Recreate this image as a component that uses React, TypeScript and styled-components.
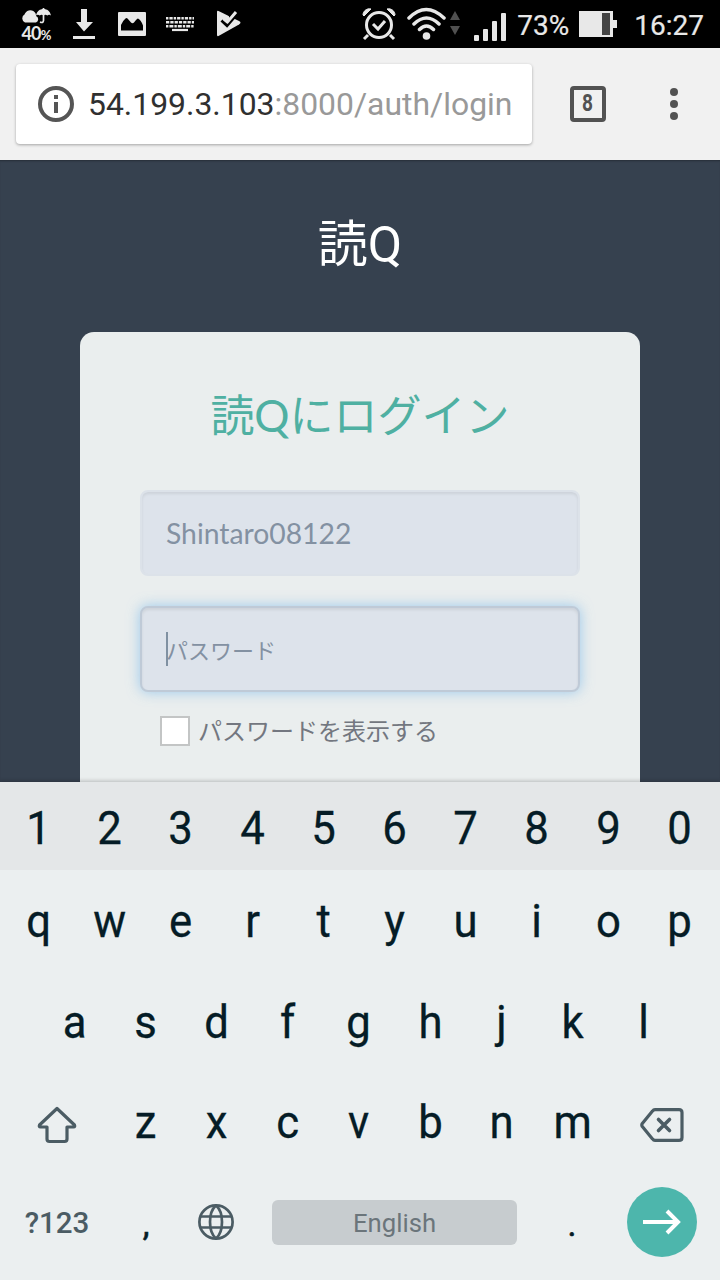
import React from "react";
import styled, { createGlobalStyle } from "styled-components";

const GlobalStyle = createGlobalStyle`
  * { box-sizing: border-box; }
  body { margin: 0; background: #ebeff0; overflow: hidden; }
`;

const Screen = styled.div`
  width: 720px;
  height: 1280px;
  display: flex;
  flex-direction: column;
  overflow: hidden;
  font-family: Roboto, "Noto Sans CJK JP", sans-serif;
`;

const StatusBar = styled.header`
  height: 48px;
  flex: none;
  display: flex;
  justify-content: space-between;
  background: #000;
  color: #e8e8e8;
`;

const StatusGroup = styled.div`
  display: flex;
  align-items: center;
`;

const StatusText = styled.span<{ $gap: number }>`
  font-size: 28px;
  line-height: 48px;
  padding-top: 4px;
  margin-left: ${(p) => p.$gap}px;
  white-space: nowrap;
  -webkit-text-stroke: 0.2px currentColor;
`;

const Weather = styled.div`
  display: flex;
  flex-direction: column;
  align-items: center;
  width: 32px;
  height: 32px;
  margin-left: 20px;
`;

const WeatherText = styled.span`
  font: 700 18px/19px Lato, sans-serif;
  letter-spacing: -0.8px;
  white-space: nowrap;
  small { font-size: 13px; font-weight: 700; }
`;

const Icon = styled.svg<{ $ml?: number }>`
  display: block;
  flex: none;
  margin-left: ${(p) => p.$ml ?? 0}px;
`;

const Toolbar = styled.div`
  height: 112px;
  flex: none;
  display: flex;
  align-items: center;
  padding-left: 16px;
  background: #f1f1f1;
`;

const AddressBar = styled.div`
  width: 516px;
  height: 80px;
  display: flex;
  align-items: center;
  padding-left: 22px;
  border-radius: 4px;
  background: #fff;
  box-shadow: 0 1px 3px rgba(0, 0, 0, 0.32);
`;

const Url = styled.div`
  margin-left: 14px;
  font-size: 31.9px;
  line-height: 40px;
  color: #999;
  white-space: nowrap;
  b { font-weight: 400; color: #303030; }
`;

const TabCount = styled.div`
  width: 36px;
  height: 36px;
  margin-left: 38px;
  border: 4px solid #525252;
  border-radius: 4px;
  display: flex;
  align-items: center;
  justify-content: center;
  color: #525252;
  font-size: 23px;
  font-weight: 700;
  line-height: 28px;
  span { transform: scaleX(0.83); }
`;

const Page = styled.main`
  height: 622px;
  flex: none;
  overflow: hidden;
  background: #36414f;
  box-shadow: inset 0 2px 2px -1px rgba(0, 0, 0, 0.3);
  display: flex;
  flex-direction: column;
  align-items: center;
`;

const Brand = styled.h1`
  margin: 49px 0 0;
  height: 123px;
  flex: none;
  font-size: 50px;
  font-weight: 400;
  line-height: 72px;
  color: #fff;
`;

const Card = styled.section`
  width: 560px;
  height: 560px;
  flex: none;
  padding: 47px 60px 0;
  border-radius: 14px 14px 0 0;
  background: #eaeeee;
`;

const CardTitle = styled.h2`
  margin: 0 0 39px;
  height: 72px;
  text-align: center;
  font: 400 44px/72px Lato, "Noto Sans CJK JP", sans-serif;
  color: #4fb0a2;
`;

const Field = styled.div<{ $focused?: boolean }>`
  height: 86px;
  margin-bottom: 30px;
  padding-left: 24px;
  display: flex;
  align-items: center;
  border: 2px solid ${(p) => (p.$focused ? "#bfcad7" : "#dce2e9")};
  border-radius: 8px;
  background: #dde3eb;
  color: #8391a2;
  font-family: Lato, "Noto Sans CJK JP", sans-serif;
  font-size: ${(p) => (p.$focused ? 22 : 28.3)}px;
  line-height: 40px;
  box-shadow: inset 0 2px 3px rgba(0, 0, 0, 0.075)
    ${(p) => (p.$focused ? ", 0 0 13px rgba(102, 175, 233, 0.6)" : "")};
`;

const Placeholder = styled.span`
  padding-top: 4px;
`;

const Caret = styled.i`
  width: 2px;
  height: 34px;
  margin-right: -2px;
  background: #8091a2;
`;

const CheckRow = styled.label`
  display: flex;
  align-items: center;
  height: 36px;
  margin: -9px 0 0 20px;
  color: #737780;
  font: 400 24px/36px Lato, "Noto Sans CJK JP", sans-serif;
`;

const Checkbox = styled.span`
  width: 30px;
  height: 30px;
  margin-right: 8px;
  border: 2px solid #c3c5c5;
  background: #fff;
`;

const Keyboard = styled.div`
  height: 498px;
  flex: none;
  background: #ebeff0;
  box-shadow: 0 -1px 4px rgba(0, 0, 0, 0.22);
  position: relative;
  color: #051c26;
`;

const KeyRow = styled.div<{ $numbers?: boolean }>`
  height: ${(p) => (p.$numbers ? 88 : 100.5)}px;
  padding: ${(p) => (p.$numbers ? 4 : 2)}px 5px 0 3px;
  display: flex;
  justify-content: center;
  align-items: center;
  background: ${(p) => (p.$numbers ? "#e4e7e8" : "transparent")};
`;

const Key = styled.div`
  width: 71.2px;
  flex: none;
  text-align: center;
  font-size: 46px;
  line-height: 60px;
  transform: scaleX(0.95);
  -webkit-text-stroke: 0.3px currentColor;
`;

const SideKey = styled.div`
  width: 108px;
  flex: none;
  display: flex;
  justify-content: center;
  padding-top: 5px;
`;

const BottomRow = styled.div`
  height: 101px;
  display: flex;
  align-items: center;
`;

const SymbolsKey = styled.div`
  width: 114px;
  padding-top: 1px;
  text-align: center;
  font-size: 29.5px;
  font-weight: 500;
  color: #4b5c64;
`;

const Punctuation = styled.div<{ $width: number }>`
  width: ${(p) => p.$width}px;
  text-align: center;
  font-size: 34px;
  line-height: 60px;
  padding-top: 4px;
  -webkit-text-stroke: 0.6px currentColor;
`;

const SpaceBar = styled.div`
  width: 245px;
  height: 45px;
  margin-left: 38px;
  border-radius: 6px;
  background: #c7cccf;
  color: #6b757b;
  text-align: center;
  font-size: 25.700px;
  line-height: 46px;
`;

const EnterKey = styled.div`
  width: 70px;
  height: 70px;
  border-radius: 50%;
  background: #4db6ac;
  display: flex;
  align-items: center;
  justify-content: center;
`;

const keys = (s: string) => s.split("").map((c) => <Key key={c}>{c}</Key>);

export default function App() {
  return (
    <>
      <GlobalStyle />
      <Screen>
        <StatusBar>
          <StatusGroup>
            <Weather>
              <Icon width="32" height="16" viewBox="0 0 32 16" fill="#e8e8e8">
                <path d="M5 14.500a4.500 4.500 0 0 1-.5-8 6 6 0 0 1 10-2.500 5 5 0 0 1 1.500 4 3.500 3.500 0 0 1 0 6.500Z" />
                <path d="M16 7.500C17 3 20 1 23.500 1S30 3 31 7.500q-2-1.300-3.700 0-1.900-1.300-3.800 0-1.900-1.300-3.800 0-1.700-1.300-3.700 0Z" />
                <path d="M23.500 0v12.500q-.3 3-3.500 1.500" fill="none" stroke="#e8e8e8" strokeWidth="1.700" />
              </Icon>
              <WeatherText>40<small>%</small></WeatherText>
            </Weather>
            <Icon $ml={21} width="22" height="30" viewBox="0 0 22 30" fill="#e8e8e8">
              <path d="M8 0h6v13h6L11 22.500 3 13h5ZM0 27h22v3H0Z" />
            </Icon>
            <Icon $ml={23} width="28" height="24" viewBox="0 0 28 24" fill="#e8e8e8">
              <path fillRule="evenodd" d="M1 0h26q1 0 1 1v22q0 1-1 1H1q-1 0-1-1V1q0-1 1-1ZM3 18.500h22v-5Q23 8 20 6.500q-1 0-4 4-1.500 1.500-3 0L9.500 6.500q-1-1-2 0Q4.500 9 3 13Z" />
            </Icon>
            <Icon $ml={20} width="28" height="16" viewBox="0 0 28 16" fill="none" stroke="#e8e8e8">
              <path d="M0 2.300h28" strokeWidth="2.500" strokeDasharray="2.400 1 3.300 1" />
              <path d="M0 6.300h28" strokeWidth="2.500" strokeDasharray="3.300 1" />
              <path d="M0 10.300h28" strokeWidth="2.500" strokeDasharray="2.400 1 4 1" />
              <path d="M6 14h16" strokeWidth="2.200" />
            </Icon>
            <Icon $ml={22} width="26" height="28" viewBox="0 0 26 28">
              <path d="M1 1.500Q1 .5 2.500 1l20.500 10q3 1.500 0 3.500L2.500 26Q1 26.500 1 25Z" fill="#e8e8e8" />
              <path d="m5.500 10.500 5.500 5L21 4" fill="none" stroke="#000" strokeWidth="3" />
              <path d="M12 4 22-1v3l-8 7Z" fill="#000" />
              <path d="m8 9 3.500 3 8.500-10" fill="none" stroke="#e8e8e8" strokeWidth="3" />
            </Icon>
          </StatusGroup>
          <StatusGroup>
            <Icon width="34" height="34" viewBox="0 0 34 34" fill="none" stroke="#e8e8e8" strokeWidth="3">
              <circle cx="17" cy="18" r="12.500" />
              <path d="m11 17 5 5 7-8M6 28l-4 4M28 28l4 4" />
              <path d="M1 8C1 4 5 1 9 2L2 9ZM33 8C33 4 29 1 25 2L32 9Z" fill="#e8e8e8" strokeWidth="1" />
            </Icon>
            <Icon $ml={11} width="53" height="34" viewBox="0 0 53 34" fill="none" stroke="#e8e8e8" strokeWidth="3.500" strokeLinecap="round">
              <path d="M2 11Q19-6 37 11M7 17Q19.500 5 32 17M12.500 22.500Q19.500 15.500 26.500 22.500" />
              <circle cx="19.500" cy="29" r="3.800" fill="#e8e8e8" stroke="none" />
              <path d="m43 13 5-9 5 9ZM43 19l5 9 5-9Z" fill="#505050" stroke="none" />
            </Icon>
            <Icon $ml={14} width="32" height="34" viewBox="0 0 32 34" fill="#e8e8e8">
              <rect y="28" width="5" height="6" rx="1" />
              <rect x="9" y="22" width="5" height="12" rx="1" />
              <rect x="18" y="14" width="5" height="20" rx="1" />
              <rect x="27" y="6" width="5" height="28" rx="1" />
            </Icon>
            <StatusText $gap={11}>73%</StatusText>
            <Icon $ml={10} width="38" height="26" viewBox="0 0 38 26">
              <path d="M0 0h34v9h4v8h-4v9H0Z" fill="#e8e8e8" />
              <path d="M23 2h8v22h-8Z" fill="#444" />
            </Icon>
            <StatusText $gap={17}>16:27</StatusText>
            <Icon width="16" height="1" />
          </StatusGroup>
        </StatusBar>

        <Toolbar>
          <AddressBar>
            <Icon width="36" height="36" viewBox="0 0 36 36">
              <circle cx="18" cy="18" r="16" fill="none" stroke="#555" strokeWidth="4" />
              <path d="M16 9h4v4h-4ZM16 16h4v11h-4Z" fill="#555" />
            </Icon>
            <Url><b>54.199.3.103</b>:8000/auth/login</Url>
          </AddressBar>
          <TabCount><span>8</span></TabCount>
          <Icon $ml={64} width="8" height="32" viewBox="0 0 8 32" fill="#525252">
            <circle cx="4" cy="4" r="4" />
            <circle cx="4" cy="16" r="4" />
            <circle cx="4" cy="28" r="4" />
          </Icon>
        </Toolbar>

        <Page>
          <Brand>読Q</Brand>
          <Card>
            <CardTitle>読Qにログイン</CardTitle>
            <Field>Shintaro08122</Field>
            <Field $focused><Caret /><Placeholder>パスワード</Placeholder></Field>
            <CheckRow><Checkbox />パスワードを表示する</CheckRow>
          </Card>
        </Page>

        <Keyboard>
          <KeyRow $numbers>{keys("1234567890")}</KeyRow>
          <KeyRow>{keys("qwertyuiop")}</KeyRow>
          <KeyRow>{keys("asdfghjkl")}</KeyRow>
          <KeyRow>
            <SideKey>
              <Icon $ml={2} width="40" height="38" viewBox="0 0 40 38" fill="none" stroke="#4b5c64" strokeWidth="3.200" strokeLinejoin="round">
                <path d="M20 2.500 37.500 19q.8 2-1 2H30v12q0 2.500-2.500 2.500h-15Q10 35.500 10 33V21H3.500q-1.800 0-1-2Z" />
              </Icon>
            </SideKey>
            {keys("zxcvbnm")}
            <SideKey>
              <Icon width="44" height="34" viewBox="0 0 44 34" fill="none" stroke="#4b5c64" strokeWidth="3.200" strokeLinejoin="round">
                <path d="M15 1.600h24q3 0 3 3v24.800q0 3-3 3H15q-1.500 0-2.500-1.500L2.300 18.500q-1-1.500 0-3L12.500 3.100q1-1.500 2.500-1.500Z" />
                <path d="m18.500 11.500 11 11m0-11-11 11" strokeLinecap="round" strokeWidth="3.600" />
              </Icon>
            </SideKey>
          </KeyRow>
          <BottomRow>
            <SymbolsKey>?123</SymbolsKey>
            <Punctuation $width={64}>,</Punctuation>
            <Icon $ml={20} width="36" height="36" viewBox="0 0 36 36" fill="none" stroke="#4b5c64" strokeWidth="2.700">
              <circle cx="18" cy="18" r="16.600" />
              <path d="M2.500 12.500h31M2.500 23.500h31" />
              <path d="M18 1.500q-6 5-6 16.500t6 16.500q6-5 6-16.500T18 1.500Z" />
            </Icon>
            <SpaceBar>English</SpaceBar>
            <Punctuation $width={110}>.</Punctuation>
            <EnterKey>
              <Icon width="38" height="26" viewBox="0 0 38 26" fill="none" stroke="#fff" strokeWidth="4">
                <path d="M0 13h35M24 2l11 11-11 11" />
              </Icon>
            </EnterKey>
          </BottomRow>
        </Keyboard>
      </Screen>
    </>
  );
}
